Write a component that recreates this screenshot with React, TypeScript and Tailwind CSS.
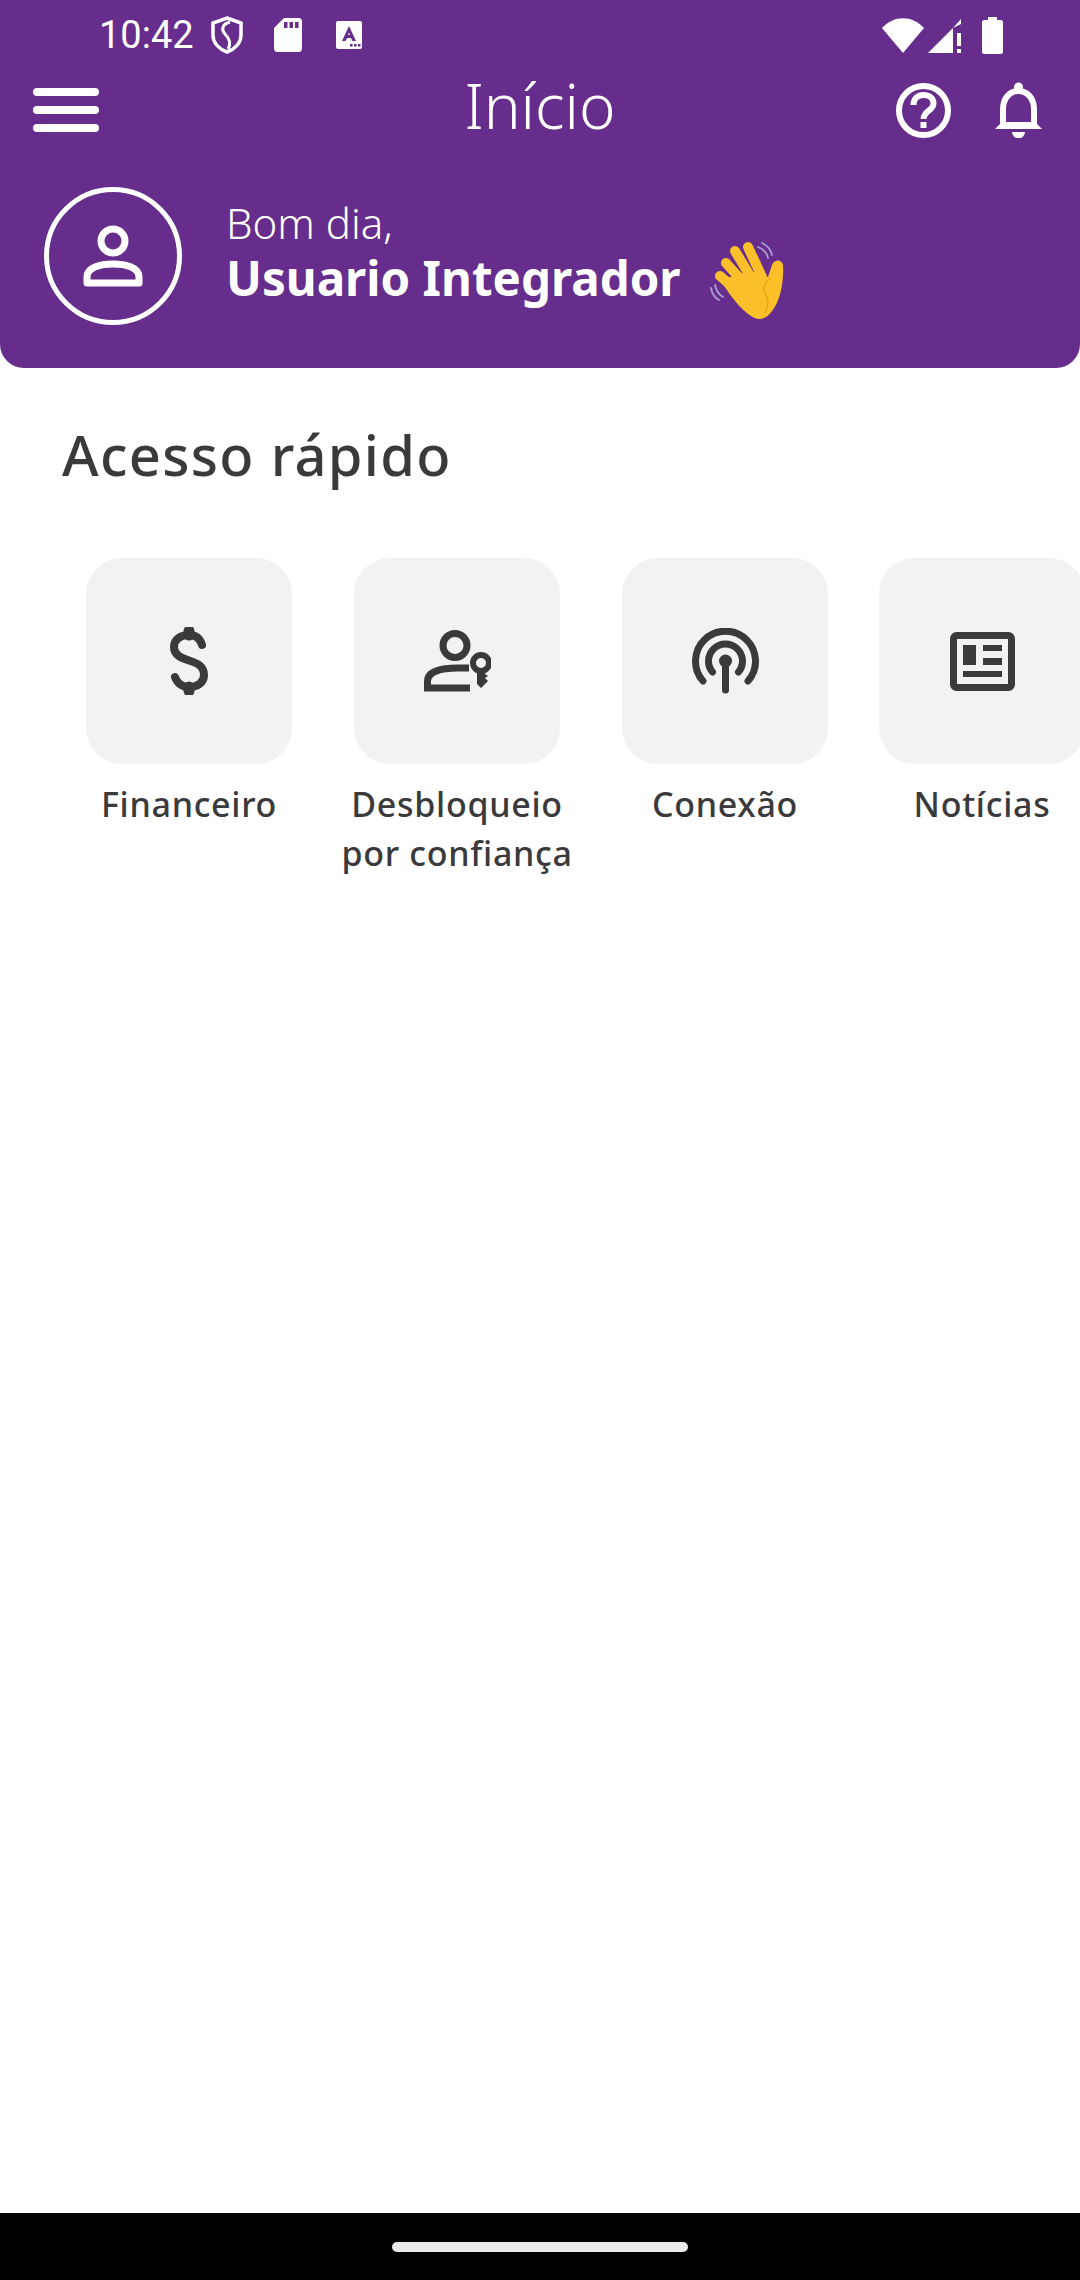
import React from "react";

const items = [
  { label: "Financeiro", icon: <DollarIcon />, width: "w-[206px]" },
  { label: "Desbloqueio\npor confiança", icon: <PersonKeyIcon />, width: "w-[228px]" },
  { label: "Conexão", icon: <PodcastIcon />, width: "w-[206px]" },
  { label: "Notícias", icon: <NewsIcon />, width: "w-[206px]" },
];

function DollarIcon() {
  return (
    <svg width="40" height="68" viewBox="0 0 40 68" fill="none" stroke="#3a3a3c" strokeWidth="8" strokeLinecap="round">
      <path d="M33 18C31 11 26 8 20 8C12 8 5 12 5 20C5 28 12 31 20 33.500C28 36 35 39 35 48C35 56 28 60 20 60C13 60 8 56 6 50" />
      <path d="M20 4V8M20 60V64" strokeWidth="11" />
    </svg>
  );
}

function PersonKeyIcon() {
  return (
    <svg width="67" height="62" viewBox="0 0 67 62" fill="none" stroke="#3a3a3c" strokeWidth="7">
      <circle cx="31" cy="15.500" r="12" />
      <path d="M45 38H34C16 38 3.500 42 3.500 51V58H46" />
      <circle cx="57" cy="33" r="8" strokeWidth="6" />
      <path d="M53 40H61V44L64 46L61 48L64 51L57 58L53 54Z" fill="#3a3a3c" stroke="none" />
    </svg>
  );
}

function PodcastIcon() {
  return (
    <svg width="67" height="67" viewBox="0 0 67 67" fill="none" stroke="#3a3a3c" strokeWidth="7" strokeLinecap="round">
      <path d="M11 53A30 30 0 1 1 56 53" />
      <path d="M20.500 44A17 17 0 1 1 46.500 44" />
      <path d="M33.500 34V62" />
      <circle cx="33.500" cy="33" r="6.500" fill="#3a3a3c" stroke="none" />
    </svg>
  );
}

function NewsIcon() {
  return (
    <svg width="65" height="59" viewBox="0 0 65 59" fill="#3a3a3c">
      <rect x="3.500" y="3.500" width="58" height="52" rx="3" fill="none" stroke="#3a3a3c" strokeWidth="7" />
      <rect x="13" y="13" width="13" height="20" />
      <rect x="33" y="13" width="19" height="6" />
      <rect x="33" y="26" width="19" height="7" />
      <rect x="13" y="39" width="39" height="6" />
    </svg>
  );
}

function WaveHand() {
  return (
    <svg width="100" height="90" viewBox="0 0 100 90" fill="none" strokeLinecap="round" className="shrink-0">
      <g stroke="#a99cd0" strokeWidth="1.800">
        <path d="M60 14C65 16 69 20 70 25" />
        <path d="M64 10C69 12 73 17 74 22" />
        <path d="M13 55C14 60 17 65 21 67" />
        <path d="M17 52C18 57 20 61 25 64" />
      </g>
      <g stroke="#fbbf2a" strokeWidth="10">
        <path d="M50 14L64 44" />
        <path d="M37 18L54 46" />
        <path d="M28 30L46 50" />
        <path d="M22 43L42 60" />
      </g>
      <path d="M22 47L52 38L70 44L74 32C76 26 84 26 85 32C86 50 82 68 74 78C68 87 60 88 53 83C44 77 36 68 22 47Z" fill="#fbbf2a" />
      <path d="M72 46C66 50 64 56 68 62C71 67 70 74 67 80" stroke="#e8a317" strokeWidth="1.500" />
    </svg>
  );
}

export default function App() {
  return (
    <div className="w-[1080px] h-[2280px] flex flex-col bg-white overflow-hidden font-['Noto_Sans',sans-serif]">
      <header className="h-[368px] bg-[#662d8c] rounded-b-[24px] text-white flex flex-col shrink-0">
        {/* Status bar */}
        <div className="h-[66px] flex items-center pl-[99px] pr-[77px] pt-[4px]">
          <span className="font-['Roboto',sans-serif] text-[38px] leading-none mr-[17px]">10:42</span>
          <svg width="32" height="38" viewBox="0 0 32 38" fill="none" stroke="white" strokeWidth="3.500" className="mr-[31px]">
            <path d="M16 2L30 7V19C30 27 24 33 16 36C8 33 2 27 2 19V7Z" />
            <path d="M19 6C11 8 10 14 14 18C19 23 20 28 17 33" strokeWidth="3" />
          </svg>
          <svg width="28" height="34" viewBox="0 0 28 34" className="mr-[34px]">
            <path d="M10 0H25C26.500 0 28 1.500 28 3V31C28 32.500 26.500 34 25 34H3C1.500 34 0 32.500 0 31V10Z" fill="white" />
            <rect x="10" y="4" width="3.500" height="6" fill="#662d8c" />
            <rect x="15.500" y="4" width="3.500" height="6" fill="#662d8c" />
            <rect x="21" y="4" width="3.500" height="6" fill="#662d8c" />
          </svg>
          <svg width="26" height="28" viewBox="0 0 26 28">
            <rect width="26" height="28" rx="2" fill="white" />
            <path d="M13 5L20 20H16.500L15 17H11L9.500 20H6ZM12 14H14L13 11.500Z" fill="#662d8c" fillRule="evenodd" />
            <rect x="14" y="23" width="2.500" height="2.500" fill="#662d8c" />
            <rect x="18" y="23" width="2.500" height="2.500" fill="#662d8c" />
            <rect x="22" y="23" width="2.500" height="2.500" fill="#662d8c" />
          </svg>
          <div className="flex-1" />
          <svg width="42" height="35" viewBox="0 0 42 35" className="mr-[4px]">
            <path d="M0 10C12 -3 30 -3 42 10L21 35Z" fill="white" />
          </svg>
          <svg width="34" height="35" viewBox="0 0 34 35" className="mr-[20px]">
            <path d="M0 35L25 10V35Z" fill="white" />
            <path d="M33 1V6L25 10Z" fill="white" />
            <rect x="29" y="15" width="4" height="13" fill="white" />
            <rect x="29" y="31" width="4" height="4" fill="white" />
          </svg>
          <svg width="21" height="37" viewBox="0 0 21 37">
            <path d="M6 0H15V3H19C20 3 21 4 21 5V35C21 36 20 37 19 37H2C1 37 0 36 0 35V5C0 4 1 3 2 3H6Z" fill="white" />
          </svg>
        </div>

        {/* Toolbar */}
        <div className="h-[88px] grid grid-cols-[1fr_auto_1fr] items-center px-[33px]">
          <div className="flex flex-col gap-[10px] w-[66px]">
            <span className="h-[8px] rounded-full bg-white" />
            <span className="h-[8px] rounded-full bg-white" />
            <span className="h-[8px] rounded-full bg-white" />
          </div>
          <h1 className="text-[62px] leading-none font-light mb-[10px]">Início</h1>
          <div className="flex items-center justify-end gap-[44px] pr-[5px]">
            <svg width="55" height="55" viewBox="0 0 55 55" fill="none" stroke="white" strokeWidth="6">
              <circle cx="27.500" cy="27.500" r="24.500" />
              <path d="M17.500 22C17.500 15.500 22 12 27.500 12C33.500 12 37.500 15.500 37.500 20.500C37.500 27.500 27.500 28 27.500 36" />
              <rect x="24.500" y="39" width="6" height="6" fill="white" stroke="none" />
            </svg>
            <svg width="47" height="56" viewBox="0 0 47 56" fill="none" stroke="white" strokeWidth="6">
              <circle cx="23.500" cy="5" r="4.500" fill="white" stroke="none" />
              <path d="M8 44V27C8 16 15 9 23.500 9C32 9 39 16 39 27V44" />
              <path d="M0 47L7 40H40L47 47Z" fill="white" stroke="none" />
              <path d="M17 50H30A6.500 6.500 0 0 1 17 50Z" fill="white" stroke="none" />
            </svg>
          </div>
        </div>

        {/* Greeting */}
        <div className="flex items-center pl-[44px] pt-[33px]">
          <div className="w-[138px] h-[138px] rounded-full border-[5px] border-white flex items-center justify-center shrink-0">
            <svg width="60" height="62" viewBox="0 0 60 62" fill="none" stroke="white" strokeWidth="7">
              <circle cx="30" cy="16" r="12" />
              <path d="M4 58V52C4 42 18 39 30 39C42 39 56 42 56 52V58Z" strokeLinejoin="round" />
            </svg>
          </div>
          <div className="ml-[44px] mb-[12px]">
            <p className="text-[42px] leading-[55px] font-light">Bom dia,</p>
            <div className="flex items-center h-[55px]">
              <span className="text-[47.500px] leading-[55px] font-bold whitespace-nowrap">Usuario Integrador</span>
              <div className="ml-[17px] -my-[20px]">
                <WaveHand />
              </div>
            </div>
          </div>
        </div>
      </header>

      <main className="flex-1">
        <h2 className="pl-[62px] pt-[50px] text-[56px] leading-[72px] font-medium tracking-[1.3px] text-[#3a3a3c]">Acesso rápido</h2>
        <div className="mt-[68px] flex gap-[51px] pl-[86px] overflow-hidden">
          {items.map((item) => (
            <div key={item.label} className={`${item.width} shrink-0 flex flex-col items-center`}>
              <div className="w-[206px] h-[206px] rounded-[36px] bg-[#f2f2f5] flex items-center justify-center">
                {item.icon}
              </div>
              <span className="mt-[16px] text-[34px] leading-[49px] font-medium tracking-[0.7px] text-[#3a3a3c] text-center whitespace-pre">
                {item.label}
              </span>
            </div>
          ))}
        </div>
      </main>

      {/* Gesture bar */}
      <div className="h-[67px] bg-black flex items-center justify-center shrink-0">
        <span className="w-[296px] h-[10px] rounded-full bg-[#e9e9ea]" />
      </div>
    </div>
  );
}
